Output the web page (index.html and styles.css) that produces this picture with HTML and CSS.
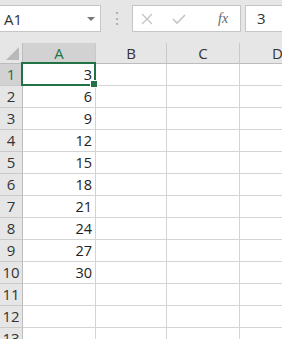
FILE: index.html
```html
<!DOCTYPE html>
<html lang="en">
<head>
  <meta charset="UTF-8">
  <title>Sheet</title>
  <link rel="stylesheet" href="styles.css">
</head>
<body>
  <div class="toolbar">
    <div class="namebox">
      <span>A1</span>
      <span class="caret"></span>
    </div>
    <div class="grip">⋮</div>
    <div class="buttons">
      <svg class="btn" width="14" height="14" viewBox="0 0 14 14"><path d="M2 2 L12 12 M12 2 L2 12" stroke="#c4c4c4" stroke-width="1.3" fill="none"/></svg>
      <svg class="btn" width="16" height="14" viewBox="0 0 16 14"><path d="M2 7 L6 11 L14 3" stroke="#c4c4c4" stroke-width="1.6" fill="none"/></svg>
      <span class="fx">fx</span>
    </div>
    <div class="formula">3</div>
  </div>

  <div class="sheet" id="sheet">
    <div class="corner"><span class="tri"></span></div>
    <div class="colhead active">A</div>
    <div class="colhead">B</div>
    <div class="colhead">C</div>
    <div class="colhead last">D</div>
  </div>

  <script>
    const sheet = document.getElementById('sheet');
    let html = '';
    for (let r = 1; r <= 13; r++) {
      const value = r <= 10 ? r * 3 : '';
      html += `<div class="rowhead ${r === 1 ? 'active' : ''}">${r}</div>`;
      html += `<div class="cell num ${r === 1 ? 'selected' : ''}">${value}${r === 1 ? '<span class="handle"></span>' : ''}</div>`;
      html += '<div class="cell"></div><div class="cell"></div><div class="cell"></div>';
    }
    sheet.insertAdjacentHTML('beforeend', html);
  </script>
</body>
</html>
```

FILE: styles.css
```css
body {
  margin: 0;
  background: #fff;
  font-family: 'Open Sans', 'Noto Sans', sans-serif;
  color: #222;
  overflow: hidden;
}

.toolbar {
  height: 43px;
  background: #e6e6e6;
  display: flex;
  align-items: flex-start;
  padding-top: 5px;
  box-sizing: border-box;
}

.namebox {
  width: 101px;
  height: 27px;
  box-sizing: border-box;
  background: #fff;
  border: 1px solid #c6c6c6;
  border-left: none;
  display: flex;
  align-items: center;
  justify-content: space-between;
  padding: 0 5px 0 4px;
  font-size: 15px;
  color: #333;
}

.caret {
  width: 0;
  height: 0;
  border-left: 4px solid transparent;
  border-right: 4px solid transparent;
  border-top: 4px solid #777;
}

.grip {
  width: 31px;
  text-align: center;
  color: #a8a8a8;
  font-size: 16px;
  line-height: 27px;
}

.buttons {
  width: 109px;
  height: 27px;
  box-sizing: border-box;
  background: #fff;
  border: 1px solid #c6c6c6;
  display: flex;
  align-items: center;
  padding-left: 7px;
  gap: 17px;
}

.fx {
  font-family: 'Liberation Serif', serif;
  font-style: italic;
  font-size: 14px;
  color: #666;
  margin-left: 14px;
}

.formula {
  margin-left: 4px;
  flex: 1;
  height: 27px;
  box-sizing: border-box;
  background: #fff;
  border: 1px solid #c6c6c6;
  border-right: none;
  padding-left: 11px;
  font-size: 15px;
  line-height: 25px;
  color: #333;
}

.sheet {
  display: grid;
  grid-template-columns: 23px 73px 71px 73px 1fr;
  grid-template-rows: 21px;
  grid-auto-rows: 22px;
}

.corner {
  background: #e6e6e6;
  border-right: 1px solid #bcbcbc;
  border-bottom: 1px solid #bcbcbc;
  position: relative;
}

.tri {
  position: absolute;
  right: 3px;
  bottom: 3px;
  width: 0;
  height: 0;
  border-left: 13px solid transparent;
  border-bottom: 13px solid #b9b9b9;
}

.colhead {
  background: #e6e6e6;
  border-right: 1px solid #c9c9c9;
  border-bottom: 1px solid #bcbcbc;
  text-align: center;
  font-size: 15px;
  line-height: 21px;
  color: #333;
}

.colhead.active {
  background: #d2d2d2;
  color: #217346;
  border-bottom-color: #217346;
}

.colhead.last {
  border-right: none;
  text-align: left;
  padding-left: 32px;
}

.rowhead {
  background: #e6e6e6;
  border-right: 1px solid #bcbcbc;
  border-bottom: 1px solid #c9c9c9;
  text-align: center;
  font-size: 15px;
  line-height: 21px;
  color: #333;
}

.rowhead.active {
  background: #d2d2d2;
  color: #217346;
}

.cell {
  border-right: 1px solid #d4d4d4;
  border-bottom: 1px solid #d4d4d4;
  font-size: 14.5px;
  line-height: 22px;
  color: #222;
}

.cell.num {
  text-align: right;
  padding-right: 3px;
}

.cell.selected {
  position: relative;
}

.cell.selected::after {
  content: '';
  position: absolute;
  left: -2px;
  top: -2px;
  right: -1px;
  bottom: -1px;
  border: 2px solid #217346;
}

.handle {
  position: absolute;
  right: -3px;
  bottom: -3px;
  width: 6px;
  height: 6px;
  background: #217346;
  border: 1px solid #fff;
  z-index: 1;
}
```
